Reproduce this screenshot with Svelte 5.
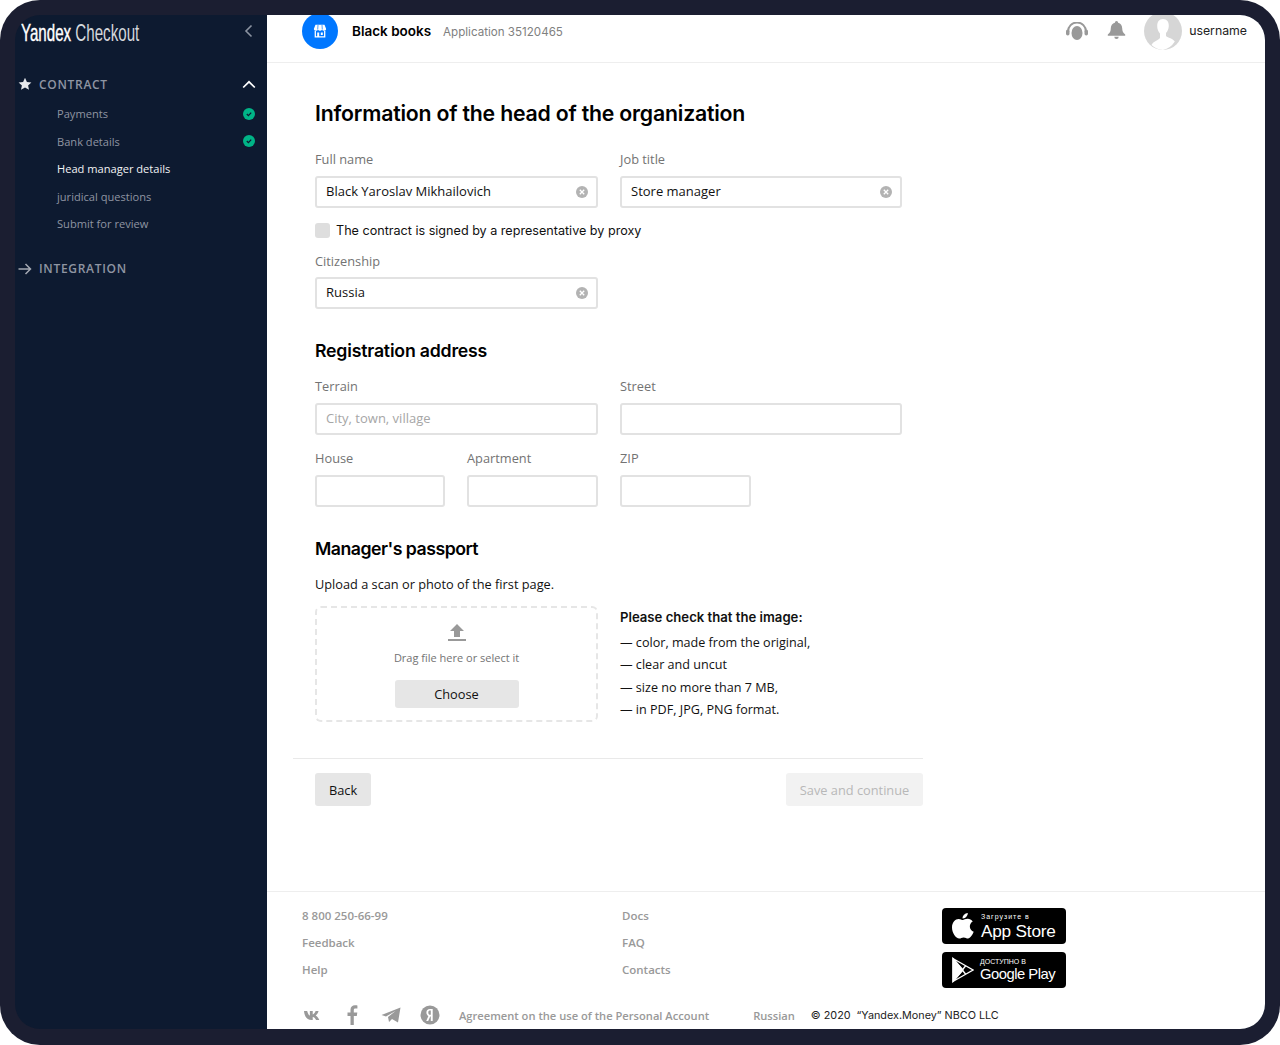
<script lang="ts">
  const steps = [
    { label: 'Payments', done: true },
    { label: 'Bank details', done: true },
    { label: 'Head manager details', current: true },
    { label: 'juridical questions' },
    { label: 'Submit for review' },
  ];
  const checks = ['color, made from the original,', 'clear and uncut', 'size no more than 7 MB,', 'in PDF, JPG, PNG format.'];
</script>

<div class="frame">
  <div class="screen">
    <aside class="sidebar">
      <div class="brand">
        <span class="logo"><b>Yandex</b> Checkout</span>
        <svg class="brand__back" width="10" height="14" viewBox="0 0 10 14"><path d="M7.5 1.5 2 7l5.5 5.5" fill="none" stroke="#8b93a1" stroke-width="1.6"/></svg>
      </div>
      <div class="section">
        <svg class="section__icon" width="14" height="14" viewBox="0 0 14 14"><path d="M7 .8l1.9 4.1 4.5.5-3.3 3 .9 4.4L7 10.6l-4 2.2.9-4.4-3.3-3 4.5-.5z" fill="#e6e8eb"/></svg>
        <span class="section__title">CONTRACT</span>
        <svg class="section__chev" width="14" height="9" viewBox="0 0 14 9"><path d="M1.2 7.5 7 1.8l5.8 5.7" fill="none" stroke="#fff" stroke-width="1.7"/></svg>
      </div>
      <ul class="steps">
        {#each steps as step}
          <li class:current={step.current}>
            <span>{step.label}</span>
            {#if step.done}
              <svg width="12" height="12" viewBox="0 0 12 12"><circle cx="6" cy="6" r="6" fill="#00b487"/><path d="M3.8 6l1.6 1.6 2.8-3" fill="none" stroke="#0d1a30" stroke-width="1.3"/></svg>
            {/if}
          </li>
        {/each}
      </ul>
      <div class="section section--second">
        <svg class="section__icon" width="14" height="12" viewBox="0 0 14 12"><path d="M0.5 6h12M7.5 1l5 5-5 5" fill="none" stroke="#a4a9b3" stroke-width="1.5"/></svg>
        <span class="section__title">INTEGRATION</span>
      </div>
    </aside>

    <main class="main">
      <header class="topbar">
        <span class="shop">
          <svg width="14" height="14" viewBox="0 0 14 14"><path d="M2.500.8h9L13.200 5a1.900 1.900 0 0 1-2 1.800A2.300 2.300 0 0 1 9 5.800a2.400 2.400 0 0 1-2 1 2.400 2.400 0 0 1-2-1 2.300 2.300 0 0 1-2.200 1A1.900 1.900 0 0 1 .8 5z" fill="#fff"/><path d="M5 1 4.700 5.500M9 1l.3 4.500" stroke="#0077ff" stroke-width=".7"/><path d="M2.300 7v5.900h9.400V7" fill="none" stroke="#fff" stroke-width="1.300"/><path d="M4.200 8.500h2v4.400h-2zM7.800 8.500h2v2.600h-2z" fill="#fff"/></svg>
        </span>
        <strong class="shop-name">Black books</strong>
        <span class="application">Application 35120465</span>
        <span class="spacer"></span>
        <svg class="top-icon" width="22" height="18" viewBox="0 0 22 18" fill="#999"><path d="M2 9.500a9 9 0 0 1 18 0" fill="none" stroke="#999" stroke-width="2"/><ellipse cx="11" cy="11" rx="5.500" ry="7"/><rect x="0" y="7.500" width="3.500" height="6" rx="1.700"/><rect x="18.500" y="7.500" width="3.500" height="6" rx="1.700"/></svg>
        <svg class="top-icon top-icon--bell" width="19" height="19" viewBox="0 0 19 19" fill="#999"><path d="M9.500 0a1.600 1.600 0 0 1 1.600 1.700c2.700.7 4.100 2.900 4.100 5.600 0 3.200 1 4.500 3 6.200v1.200H.8v-1.200c2-1.700 3-3 3-6.200 0-2.700 1.400-4.900 4.100-5.600A1.600 1.600 0 0 1 9.500 0z"/><path d="M7.300 15.700h4.400a2.200 2.200 0 0 1-4.400 0z"/></svg>
        <svg class="avatar" width="38" height="38" viewBox="0 0 38 38"><circle cx="19" cy="19" r="19" fill="#d6d6d6"/><path d="M19 7c4 0 6 3 5.800 7-.2 3-1.300 5.500-2.800 7v3c1 1.400 6 2 8.800 5.500A19 19 0 0 1 19 38a19 19 0 0 1-11.500-5c1.800-4 7-4.500 8.500-7v-4.500c-1.700-2-2.800-4.500-2.800-7.500C13.200 10 15 7 19 7z" fill="#fff"/></svg>
        <span class="username">username</span>
      </header>

      <div class="content">
        <h1>Information of the head of the organization</h1>

        <div class="grid grid--first">
          <label class="field span2"><span>Full name</span>
            <span class="input">Black Yaroslav Mikhailovich
              <svg width="12" height="12" viewBox="0 0 12 12"><circle cx="6" cy="6" r="6" fill="#b3b3b3"/><path d="M3.800 3.800l4.400 4.400m0-4.400L3.800 8.200" stroke="#fff" stroke-width="1.300"/></svg>
            </span>
          </label>
          <label class="field span2"><span>Job title</span>
            <span class="input">Store manager
              <svg width="12" height="12" viewBox="0 0 12 12"><circle cx="6" cy="6" r="6" fill="#b3b3b3"/><path d="M3.800 3.800l4.400 4.400m0-4.400L3.800 8.200" stroke="#fff" stroke-width="1.300"/></svg>
            </span>
          </label>
        </div>

        <div class="proxy"><i class="checkbox"></i>The contract is signed by a representative by proxy</div>

        <div class="grid">
          <label class="field field--tight span2"><span>Citizenship</span>
            <span class="input">Russia
              <svg width="12" height="12" viewBox="0 0 12 12"><circle cx="6" cy="6" r="6" fill="#b3b3b3"/><path d="M3.800 3.800l4.400 4.400m0-4.400L3.800 8.200" stroke="#fff" stroke-width="1.300"/></svg>
            </span>
          </label>
        </div>

        <h2 class="h-address">Registration address</h2>
        <div class="grid grid--rows">
          <label class="field span2"><span>Terrain</span><span class="input input--placeholder">City, town, village</span></label>
          <label class="field span2"><span>Street</span><span class="input"></span></label>
          <label class="field"><span>House</span><span class="input"></span></label>
          <label class="field"><span>Apartment</span><span class="input"></span></label>
          <label class="field"><span>ZIP</span><span class="input"></span></label>
        </div>

        <h2 class="h-passport">Manager's passport</h2>
        <p class="upload-note">Upload a scan or photo of the first page.</p>

        <div class="grid grid--upload">
          <div class="drop span2">
            <svg width="18" height="18" viewBox="0 0 18 18" fill="#999"><path d="M9 0l7 7h-4v6H6V7H2z"/><rect x="0" y="15" width="18" height="2"/></svg>
            <span class="drop__text">Drag file here or select it</span>
            <span class="btn btn--choose">Choose</span>
          </div>
          <div class="checks span2">
            <strong>Please check that the image:</strong>
            <ul>
              {#each checks as item}
                <li>— {item}</li>
              {/each}
            </ul>
          </div>
        </div>

        <div class="actions">
          <span class="btn btn--back">Back</span>
          <span class="btn btn--save">Save and continue</span>
        </div>
      </div>

      <footer class="footer">
        <div class="footer__top">
          <div class="links links--a"><span>8 800 250-66-99</span><span>Feedback</span><span>Help</span></div>
          <div class="links links--b"><span>Docs</span><span>FAQ</span><span>Contacts</span></div>
          <div class="stores">
            <div class="store">
              <svg width="22" height="26" viewBox="0 0 22 26" fill="#fff"><path d="M15.800 0c.2 2-1.900 5.700-5.200 5.500C10.300 2.900 12.800.2 15.800 0zM10.800 7c1 0 2.800-1.300 5-1.200 1.800.1 3.700.9 4.900 2.700-4.300 2.600-3.500 8.500 1 10.300-1 2.600-3.400 6.700-5.700 6.700-1.700 0-2.300-1.100-4.300-1.100-2.100 0-2.800 1.100-4.400 1.100C3.800 25.500 0 19.500 0 14.400 0 9 3.400 6 6.600 5.900c1.800 0 3.300 1.100 4.200 1.100z"/></svg>
              <div class="store__text"><small class="ru">Загрузите в</small><b>App Store</b></div>
            </div>
            <div class="store">
              <svg width="22" height="26" viewBox="0 0 22 26" fill="none" stroke="#fff" stroke-width="1.300"><path d="M1 1.500v23L21 13zM1 1.500 13.500 17M1 24.500 13.500 9" /><path d="M1 1.500v23L11 13z" fill="#fff"/></svg>
              <div class="store__text store__text--play"><small>ДОСТУПНО В</small><b>Google Play</b></div>
            </div>
          </div>
        </div>
        <div class="footer__bottom">
          <svg class="social social--vk" width="18" height="11" viewBox="0 0 20 12" fill="#999"><path d="M0 1h3.500c.8 3 2 5 3 5V1h3.200v3.800c1.200-.2 2.500-2 3.200-3.800h3.300c-.6 2.300-2 4-3.200 5 1.400.8 3.100 2.500 4 5h-3.600c-.7-1.700-2-3-3.700-3.300V11H8.500C3.500 11 .6 7.500 0 1z"/></svg>
          <svg class="social" width="20" height="20" viewBox="0 0 20 20" fill="#999"><path d="M11.800 20V11h3l.5-3.500h-3.500V5.300c0-1 .3-1.700 1.800-1.700h1.800V.5C15 .3 14.100.2 13 .2c-2.700 0-4.500 1.600-4.500 4.600v2.700h-3V11h3v9z"/></svg>
          <svg class="social" width="20" height="16" viewBox="0 0 20 16" fill="#999"><path d="M.5 8 19.500.5 17 15.500l-6-3.500-3 3-1-5L14.500 4 5 9.500z"/></svg>
          <svg class="social" width="20" height="20" viewBox="0 0 20 20"><circle cx="10" cy="10" r="9.500" fill="#999"/><path d="M12.700 16V4H10C7.700 4 6.400 5.400 6.400 7.500c0 1.700.8 2.800 2 3.500L6.200 16h2l2-4.600h.6V16zM10.800 9.800h-.5C9 9.800 8.300 9 8.300 7.500s.7-2 1.900-2h.6z" fill="#fff"/></svg>
          <span class="agreement">Agreement on the use of the Personal Account</span>
          <span class="lang">Russian</span>
          <span class="copy">© 2020 &nbsp;“Yandex.Money” NBCO LLC</span>
        </div>
      </footer>
    </main>
  </div>
</div>

<style>
  :global(body) {
    margin: 0;
    background: #fff;
  }
  ul {
    list-style: none;
    margin: 0;
    padding: 0;
  }
  .frame {
    box-sizing: border-box;
    width: 1280px;
    height: 1045px;
    padding: 15px;
    background: #1b1e31;
    border-radius: 40px;
    font-family: Inter, "Noto Sans", sans-serif;
    color: #000;
  }
  .screen {
    display: flex;
    height: 1014px;
    overflow: hidden;
    background: #0d1a30;
    border-radius: 25px;
  }

  .sidebar {
    flex: 0 0 252px;
    box-sizing: border-box;
    padding-right: 12px;
    color: #8f95a2;
    font-family: "Open Sans", sans-serif;
  }
  .brand {
    display: flex;
    align-items: center;
    justify-content: space-between;
    height: 34px;
    padding-left: 6px;
    padding-right: 1px;
    margin-top: 1px;
  }
  .brand__back {
    margin-bottom: 4px;
  }
  .logo {
    font-family: "Liberation Sans Narrow", "Liberation Sans", sans-serif;
    font-size: 24px;
    color: #d4d7dc;
    transform: scaleX(0.63);
    transform-origin: left center;
    white-space: nowrap;
  }
  .logo b {
    font-weight: 400;
    color: #fff;
    -webkit-text-stroke: 0.4px #fff;
  }
  .section {
    display: flex;
    align-items: center;
    height: 20px;
    margin-top: 24px;
    padding-left: 3px;
  }
  .section--second {
    margin-top: 21px;
  }
  .section__icon {
    flex: none;
    margin-right: 7px;
  }
  .section__chev {
    margin-right: -1px;
  }
  .section__title {
    flex: 1;
    font-size: 12px;
    font-weight: 600;
    letter-spacing: 0.7px;
    color: #8f95a2;
  }
  .steps {
    margin-top: 6px;
  }
  .steps li {
    display: flex;
    align-items: center;
    justify-content: space-between;
    height: 27.500px;
    padding-left: 42px;
    font-size: 11.100px;
    color: #8f95a2;
  }
  .steps li.current {
    color: #f2f3f4;
  }

  .main {
    flex: 1;
    display: flex;
    flex-direction: column;
    min-width: 0;
    background: #fff;
  }
  .topbar {
    box-sizing: border-box;
    display: flex;
    align-items: center;
    flex: none;
    height: 48px;
    padding: 0 18px 16px 35px;
    border-bottom: 1px solid #eee;
  }
  .shop {
    display: flex;
    align-items: center;
    justify-content: center;
    flex: none;
    width: 36px;
    height: 36px;
    margin-right: 14px;
    background: #0077ff;
    border-radius: 50%;
  }
  .shop-name {
    font-size: 13.500px;
    font-weight: 600;
    margin-right: 12px;
  }
  .application {
    margin-top: 2px;
    font-size: 11.600px;
    color: #808080;
  }
  .spacer {
    flex: 1;
  }
  .top-icon--bell {
    margin-left: 19px;
  }
  .avatar {
    flex: none;
    margin-left: 18px;
    margin-right: 7px;
  }
  .username {
    font-size: 12.300px;
    color: #222;
  }

  .content {
    flex: 1;
    padding: 0 48px;
    width: 587px;
  }
  h1 {
    margin: 36px 0 0;
    font-size: 21.250px;
    line-height: 28px;
    font-weight: 600;
    letter-spacing: -0.2px;
  }
  h2 {
    margin: 0;
    font-size: 17.700px;
    line-height: 24px;
    font-weight: 600;
    letter-spacing: -0.2px;
  }
  .grid {
    display: grid;
    grid-template-columns: 130px 131px 131px 129px;
    column-gap: 22px;
  }
  .grid--first {
    margin-top: 24px;
  }
  .grid--rows {
    row-gap: 15px;
    margin-top: 15px;
  }
  .span2 {
    grid-column: span 2;
  }
  .field {
    display: flex;
    flex-direction: column;
    gap: 8px;
    font-size: 12.800px;
    line-height: 17px;
    color: #737373;
    font-family: "Open Sans", sans-serif;
  }
  .field--tight {
    gap: 7px;
  }
  .input {
    box-sizing: border-box;
    display: flex;
    align-items: center;
    justify-content: space-between;
    height: 32px;
    padding: 0 8px 1px 9px;
    background: #fff;
    border: 2px solid #e2e2e2;
    border-radius: 3px;
    color: #111;
    font-family: "Open Sans", sans-serif;
    font-size: 13px;
  }
  .input--placeholder {
    color: #a6a6a6;
  }
  .proxy {
    display: flex;
    align-items: center;
    height: 16px;
    margin-top: 14px;
    margin-bottom: 15px;
    font-size: 12.600px;
    color: #111;
  }
  .checkbox {
    width: 15px;
    height: 15px;
    margin-right: 6px;
    background: #dedede;
    border-radius: 3px;
  }
  .h-address {
    margin-top: 30px;
  }
  .h-passport {
    margin-top: 30px;
    letter-spacing: -0.500px;
  }
  .upload-note {
    margin: 14px 0 13px;
    font-size: 12.750px;
    line-height: 18px;
    font-family: "Open Sans", sans-serif;
    color: #111;
  }
  .drop {
    box-sizing: border-box;
    display: flex;
    flex-direction: column;
    align-items: center;
    height: 116px;
    padding-top: 16px;
    border: 2px dashed #e6e6e6;
    border-radius: 6px;
  }
  .drop__text {
    margin-top: 8px;
    font-size: 11px;
    line-height: 16px;
    color: #737373;
    font-family: "Open Sans", sans-serif;
  }
  .btn {
    display: flex;
    align-items: center;
    justify-content: center;
    box-sizing: border-box;
    border-radius: 3px;
    font-size: 12.800px;
    font-family: "Open Sans", sans-serif;
    background: #e6e6e6;
    color: #111;
  }
  .btn--choose {
    width: 124px;
    height: 28px;
    margin-top: 14px;
  }
  .checks {
    font-size: 12.600px;
    color: #111;
  }
  .checks strong {
    display: block;
    margin-top: 2px;
    font-size: 13.150px;
    line-height: 18px;
    font-weight: 600;
  }
  .checks ul {
    margin-top: 6px;
    font-family: "Open Sans", sans-serif;
  }
  .checks li {
    line-height: 22.300px;
  }
  .actions {
    display: flex;
    justify-content: space-between;
    margin: 36px -21px 0 -22px;
    padding: 14px 0 0 22px;
    border-top: 1px solid #e9e9e9;
  }
  .btn--back {
    width: 56px;
    height: 33px;
  }
  .btn--save {
    width: 137px;
    height: 33px;
    background: #f2f2f2;
    color: #b8b8b8;
  }

  .footer {
    flex: none;
    box-sizing: border-box;
    height: 138px;
    padding: 16px 0 0 35px;
    border-top: 1px solid #eee;
    font-size: 11.500px;
    font-weight: 600;
    color: #999;
    font-family: "Open Sans", sans-serif;
  }
  .footer__top {
    display: flex;
    height: 85px;
  }
  .links {
    display: flex;
    flex-direction: column;
    gap: 10.500px;
    line-height: 16.500px;
  }
  .links--a {
    width: 320px;
  }
  .links--b {
    width: 320px;
  }
  .stores {
    display: flex;
    flex-direction: column;
    gap: 8px;
  }
  .store {
    display: flex;
    align-items: center;
    gap: 7px;
    box-sizing: border-box;
    width: 124px;
    height: 36px;
    padding-left: 10px;
    background: #000;
    border-radius: 4px;
    color: #fff;
  }
  .store__text {
    display: flex;
    flex-direction: column;
    margin-top: 2px;
    font-family: "Liberation Sans", sans-serif;
  }
  .store__text small {
    font-size: 7px;
    line-height: 8px;
    font-weight: 400;
  }
  .store__text .ru {
    letter-spacing: 1px;
  }
  .store__text b {
    font-size: 17.200px;
    line-height: 20px;
    font-weight: 400;
    letter-spacing: -0.2px;
  }
  .store__text--play {
    margin-left: -1px;
  }
  .store__text--play b {
    margin-top: -2px;
    font-size: 14.800px;
    letter-spacing: -0.500px;
  }
  .footer__bottom {
    display: flex;
    align-items: center;
    height: 30px;
    margin-top: 7px;
    font-size: 11.150px;
  }
  .social {
    flex: none;
    margin-right: 19px;
  }
  .social--vk {
    margin-left: 2px;
    margin-right: 20px;
  }
  .lang {
    margin-left: 44px;
  }
  .copy {
    margin-top: 1px;
    margin-left: 16px;
    font-weight: 400;
    color: #222;
    font-family: Inter, sans-serif;
    font-size: 10.800px;
  }
</style>
